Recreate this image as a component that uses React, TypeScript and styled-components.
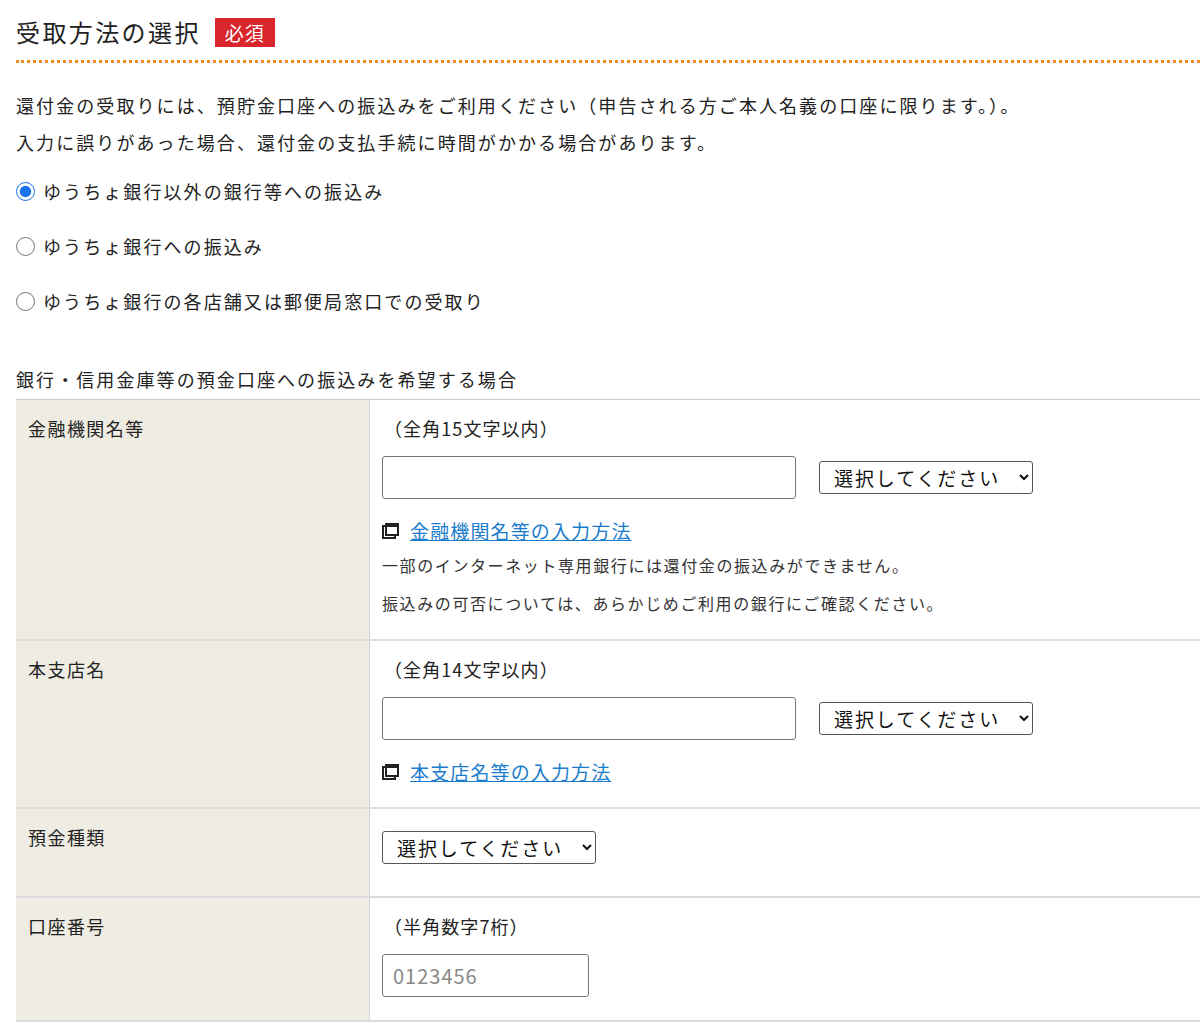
import React from 'react'
import styled, { createGlobalStyle } from 'styled-components'

const Global = createGlobalStyle`
  body { margin: 0; background: #fff; overflow: hidden; }
  * { box-sizing: border-box; }
`

const FONT = `"Noto Sans CJK JP", "Noto Sans", sans-serif`

const Page = styled.div`
  font-family: ${FONT};
  color: #222;
  padding: 14px 0 0 16px;
  width: 1200px;
  letter-spacing: 0.13em;
`

const TitleRow = styled.div`
  display: flex;
  align-items: center;
  gap: 14px;
  padding-bottom: 10px;
  border-bottom: 3px dotted #f08a1c;
`

const Title = styled.h2`
  margin: 0;
  font-size: 24px;
  font-weight: 400;
  line-height: 36px;
  letter-spacing: 0.1em;
`

const Badge = styled.span`
  background: #d9262c;
  color: #fff;
  font-size: 19px;
  line-height: 29px;
  padding: 0 10px;
  letter-spacing: 0.05em;
`

const Lead = styled.p`
  margin: 24px 0 0;
  font-size: 18px;
  line-height: 37px;
`

const Radios = styled.div`
  margin-top: 14px;
  display: flex;
  flex-direction: column;
  gap: 23px;
`

const RadioLabel = styled.label`
  display: flex;
  align-items: center;
  gap: 8px;
  font-size: 18px;
  line-height: 32px;
  input { margin: 0; width: 19px; height: 19px; accent-color: #1a73e8; }
`

const Caption = styled.div`
  margin-top: 48px;
  font-size: 18px;
  line-height: 28px;
  padding-bottom: 6px;
`

const Table = styled.div`
  border-top: 1px solid #ccc;
  width: 1200px;
`

const Row = styled.div<{ $h: number }>`
  display: grid;
  grid-template-columns: 354px 1fr;
  height: ${p => p.$h}px;
  border-bottom: 2px solid #ddd;
`

const Th = styled.div`
  background: #efede3;
  border-right: 1px solid #d5d5d5;
  padding: 14px 12px;
  font-size: 18px;
  line-height: 28px;
  letter-spacing: 0.08em;
`

const Td = styled.div`
  padding: 14px 12px;
  font-size: 18px;
  line-height: 28px;
`

const Hint = styled.div`
  padding-left: 2px;
  letter-spacing: 0.06em;
`

const Fields = styled.div<{ $top?: number }>`
  display: flex;
  align-items: center;
  gap: 23px;
  margin-top: ${p => p.$top ?? 14}px;
`

const TextInput = styled.input<{ $w: number }>`
  width: ${p => p.$w}px;
  height: 43px;
  border: 1px solid #777;
  border-radius: 3px;
  font-family: ${FONT};
  font-size: 20px;
  letter-spacing: 0.05em;
  padding: 0 10px;
  &::placeholder { color: #888; }
`

const Select = styled.select`
  width: 214px;
  height: 33px;
  border: 1px solid #555;
  border-radius: 3px;
  background: #fff;
  font-family: ${FONT};
  font-size: 19px;
  letter-spacing: 0.1em;
  padding: 0 10px;
  color: #111;
`

const LinkRow = styled.div`
  display: flex;
  align-items: center;
  gap: 10px;
  margin-top: 18px;
  a { color: #1a7ccd; text-decoration: underline; font-size: 19px; letter-spacing: 0.06em; }
`

const Note = styled.div`
  font-size: 16px;
  line-height: 36px;
  color: #333;
  margin-top: 2px;
  letter-spacing: 0.1em;
`

const WindowIcon = () => (
  <svg width="18" height="18" viewBox="0 0 18 18">
    <rect x="1" y="4" width="12" height="12" fill="none" stroke="#222" strokeWidth="2" />
    <rect x="4" y="2" width="12" height="11" fill="#fff" stroke="#222" strokeWidth="2" />
    <rect x="4" y="2" width="12" height="3" fill="#222" />
  </svg>
)

export default function App() {
  return (
    <Page>
      <Global />
      <TitleRow>
        <Title>受取方法の選択</Title>
        <Badge>必須</Badge>
      </TitleRow>
      <Lead>
        還付金の受取りには、預貯金口座への振込みをご利用ください（申告される方ご本人名義の口座に限ります。）。<br />
        入力に誤りがあった場合、還付金の支払手続に時間がかかる場合があります。
      </Lead>
      <Radios>
        <RadioLabel><input type="radio" name="r" defaultChecked />ゆうちょ銀行以外の銀行等への振込み</RadioLabel>
        <RadioLabel><input type="radio" name="r" />ゆうちょ銀行への振込み</RadioLabel>
        <RadioLabel><input type="radio" name="r" />ゆうちょ銀行の各店舗又は郵便局窓口での受取り</RadioLabel>
      </Radios>
      <Caption>銀行・信用金庫等の預金口座への振込みを希望する場合</Caption>
      <Table>
        <Row $h={241}>
          <Th>金融機関名等</Th>
          <Td>
            <Hint>（全角15文字以内）</Hint>
            <Fields>
              <TextInput $w={414} />
              <Select><option>選択してください</option></Select>
            </Fields>
            <LinkRow><WindowIcon /><a href="#">金融機関名等の入力方法</a></LinkRow>
            <Note>一部のインターネット専用銀行には還付金の振込みができません。</Note>
            <Note>振込みの可否については、あらかじめご利用の銀行にご確認ください。</Note>
          </Td>
        </Row>
        <Row $h={168}>
          <Th>本支店名</Th>
          <Td>
            <Hint>（全角14文字以内）</Hint>
            <Fields>
              <TextInput $w={414} />
              <Select><option>選択してください</option></Select>
            </Fields>
            <LinkRow><WindowIcon /><a href="#">本支店名等の入力方法</a></LinkRow>
          </Td>
        </Row>
        <Row $h={89}>
          <Th>預金種類</Th>
          <Td>
            <Fields $top={8}>
              <Select><option>選択してください</option></Select>
            </Fields>
          </Td>
        </Row>
        <Row $h={124}>
          <Th>口座番号</Th>
          <Td>
            <Hint>（半角数字7桁）</Hint>
            <Fields>
              <TextInput $w={207} placeholder="0123456" />
            </Fields>
          </Td>
        </Row>
      </Table>
    </Page>
  )
}
